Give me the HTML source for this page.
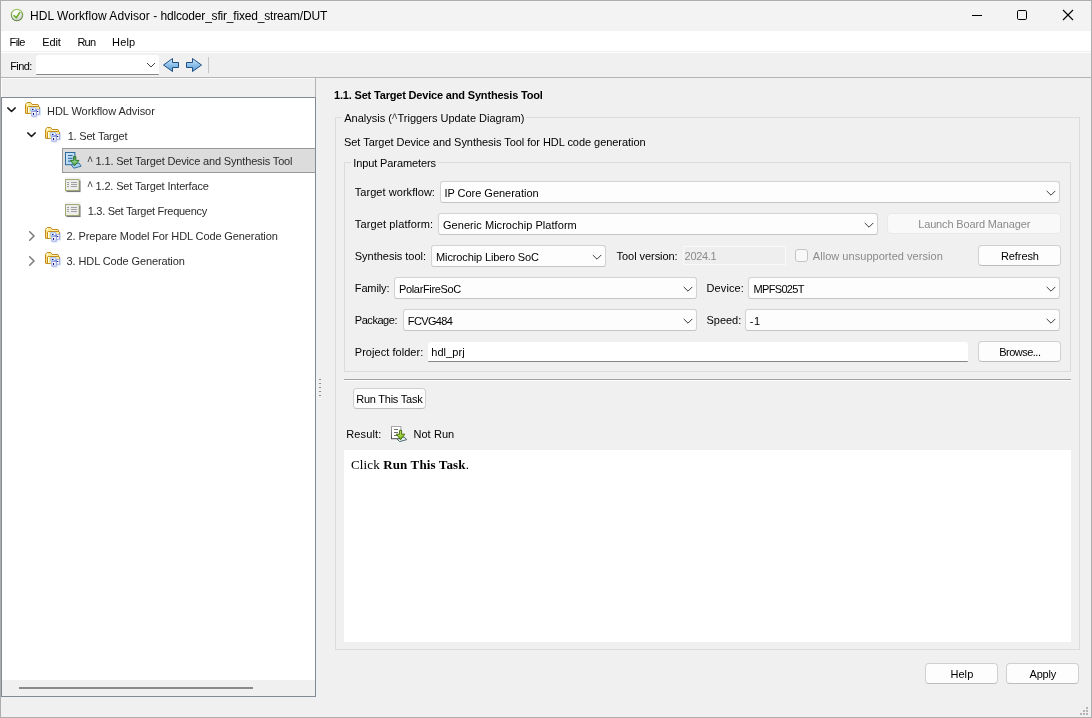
<!DOCTYPE html>
<html>
<head>
<meta charset="utf-8">
<title>HDL Workflow Advisor</title>
<style>
html,body{margin:0;padding:0;}
body{width:1092px;height:718px;overflow:hidden;background:#f0f0f0;font-family:"Liberation Sans",sans-serif;font-size:11px;color:#000;position:relative;}
.abs{position:absolute;}
.t{position:absolute;white-space:nowrap;line-height:14px;height:14px;letter-spacing:-0.1px;}
#win{position:absolute;left:0;top:0;width:1090px;height:716px;border:1px solid #adadad;}
#titlebar{left:1px;top:1px;width:1090px;height:30px;background:#f3f3f3;}
#menubar{left:1px;top:31px;width:1090px;height:20px;background:#ffffff;border-bottom:1px solid #f0f0f0;box-shadow:0 1px 0 #ffffff;}
.combo{position:absolute;height:20px;background:#fdfdfd;border:1px solid #d2d2d2;border-bottom-color:#c4c4c4;border-radius:3px;}
.combo svg{position:absolute;right:3px;top:8px;}
.btn{position:absolute;height:19px;background:#fdfdfd;border:1px solid #d0d0d0;border-bottom-color:#bcbcbc;border-radius:4px;text-align:center;line-height:20px;white-space:nowrap;letter-spacing:-0.1px;}
</style>
</head>
<body>
<div id="root" style="position:absolute;left:0;top:0;width:1092px;height:718px;will-change:transform;">
<svg width="0" height="0" style="position:absolute">
<defs>
<linearGradient id="fy" x1="0" y1="0" x2="1" y2="0"><stop offset="0" stop-color="#fff6c8"/><stop offset="0.5" stop-color="#fbe58a"/><stop offset="1" stop-color="#f6d060"/></linearGradient>
<linearGradient id="fb" x1="0" y1="0" x2="1" y2="1"><stop offset="0" stop-color="#a9c4f0"/><stop offset="1" stop-color="#7f8fd0"/></linearGradient>
<symbol id="folder" viewBox="0 0 16 16">
  <path d="M1 2.2 L2.2 1 H5.8 L7 3 H13 V5 H1 Z" fill="#fbe88a"/>
  <rect x="1" y="4" width="2" height="7.5" fill="#fbe07c"/>
  <rect x="7" y="3.4" width="6" height="1.2" fill="#fff6d4"/>
  <rect x="1.8" y="1.2" width="1.4" height="2.2" fill="#fffbe8"/>
  <path d="M0.5 11.2 V2.4 L2.1 0.5 H5.7 L7.1 2.5 H12.9 L13.4 3 V4.4" fill="none" stroke="#c68c1c" stroke-width="1" stroke-linejoin="round"/>
  <path d="M0.6 11.4 H5.8" fill="none" stroke="#bd8214" stroke-width="1"/>
  <rect x="3" y="5" width="1.1" height="6" fill="#ffffff"/>
  <rect x="4.1" y="5" width="1.6" height="6" fill="#fdf08c"/>
  <rect x="11" y="5" width="3.6" height="2.2" fill="#fdf0a4"/>
  <path d="M2.5 11 V5.2 L3.2 4.5 H14 L14.5 5.1 V7" fill="none" stroke="#c68c1c" stroke-width="1" stroke-linejoin="round"/>
  <rect x="15" y="5.6" width="0.9" height="7.6" fill="#cddef8"/>
  <rect x="7.2" y="14.6" width="5.6" height="0.9" fill="#cddef8"/>
  <rect x="11.8" y="12.6" width="3.6" height="0.9" fill="#cddef8"/>
  <rect x="5.8" y="5.8" width="4.9" height="3" fill="#ffffff" stroke="#8fb3ec" stroke-width="0.9"/>
  <rect x="11.5" y="7.3" width="3" height="4.9" fill="#ffffff" stroke="#9ba3d8" stroke-width="0.9"/>
  <rect x="6.8" y="9.5" width="4.4" height="4.6" fill="#ffffff" stroke="#8b9bdc" stroke-width="0.9"/>
  <rect x="7" y="6.9" width="1.5" height="1.1" fill="#10108a"/>
  <rect x="12" y="9" width="1.3" height="1" fill="#10108a"/>
  <rect x="8" y="11" width="1.1" height="2" fill="#10108a"/>
  <rect x="9.6" y="8.1" width="0.9" height="0.8" fill="#4a4ab0"/>
  <rect x="11" y="8.5" width="0.8" height="0.7" fill="#4a4ab0"/>
</symbol>
<symbol id="chevd" viewBox="0 0 10 6"><path d="M0.8 0.9 L4.5 4.5 L8.2 0.9" fill="none" stroke="#1a1a1a" stroke-width="1.5" stroke-linecap="round" stroke-linejoin="round"/></symbol>
<symbol id="chevr" viewBox="0 0 6 10"><path d="M0.7 0.7 L5 5 L0.7 9.3" fill="none" stroke="#7a7a7a" stroke-width="1.5" stroke-linecap="round" stroke-linejoin="round"/></symbol>
<symbol id="carr" viewBox="0 0 10 6"><path d="M1 1.2 L5 5.2 L9 1.2" fill="none" stroke="#3c3c3c" stroke-width="1" stroke-linecap="round" stroke-linejoin="round"/></symbol>
<linearGradient id="dg" x1="0" y1="0" x2="1" y2="1"><stop offset="0" stop-color="#cfe6fb"/><stop offset="1" stop-color="#a4cdf2"/></linearGradient>
<linearGradient id="gg" x1="0" y1="0" x2="0" y2="1"><stop offset="0" stop-color="#3f8a3a"/><stop offset="0.5" stop-color="#8fd086"/><stop offset="1" stop-color="#4c9a46"/></linearGradient>
<symbol id="task" viewBox="0 0 17 17">
  <path d="M5.5 12 L14 11 L16.2 14.2 L8.8 16.2 Z" fill="#a9d0ee" stroke="#2b6a9c" stroke-width="0.9" stroke-linejoin="round"/>
  <rect x="0.5" y="0.5" width="9.4" height="12.2" fill="url(#dg)" stroke="#2f6a99" stroke-width="1"/>
  <path d="M3 3.5 H7.5 M3 6.3 H7.5 M3 9.1 H6" stroke="#2c6591" stroke-width="1" fill="none"/>
  <path d="M8.6 4.6 H10.8 V8.4 H14 L9.7 13.6 L5.4 8.4 H8.6 Z" fill="url(#gg)" stroke="#2f7a2c" stroke-width="1" stroke-linejoin="round"/>
</symbol>
<linearGradient id="gd" x1="0" y1="0" x2="0" y2="1"><stop offset="0" stop-color="#a8a8a8"/><stop offset="1" stop-color="#4a4a4a"/></linearGradient>
<linearGradient id="og" x1="0" y1="0" x2="0" y2="1"><stop offset="0" stop-color="#d8f08a"/><stop offset="0.6" stop-color="#9acd32"/><stop offset="1" stop-color="#6fa01a"/></linearGradient>
<symbol id="task2" viewBox="0 0 17 17">
  <path d="M5.2 12.2 L13 11 L15.8 13.6 L8.6 15.6 Z" fill="#e4eef4" stroke="#3c5a5e" stroke-width="0.9" stroke-linejoin="round"/>
  <rect x="0.5" y="0.5" width="9.4" height="12.2" fill="#ffffff" stroke="url(#gd)" stroke-width="1"/>
  <path d="M3 3.5 H7 M3 6.5 H7 M3 9.5 H6" stroke="#6e6e6e" stroke-width="1" fill="none"/>
  <path d="M8.6 4.4 H10.6 V8.2 H13.8 L9.6 13.6 L5.4 8.2 H8.6 Z" fill="url(#og)" stroke="#44700a" stroke-width="1" stroke-linejoin="round"/>
</symbol>
<symbol id="list" viewBox="0 0 16 16">
  <rect x="0" y="0" width="16" height="16" fill="#f3f3f3"/>
  <rect x="1.5" y="3.5" width="14" height="11.5" fill="#7a7a7a"/>
  <rect x="0.5" y="2.5" width="13.5" height="11" fill="#eeeedf" stroke="#a3a878" stroke-width="1"/>
  <rect x="1.2" y="3.2" width="12.1" height="9" fill="#ececec"/>
  <path d="M2 5.5 H4 M6 5.5 H12 M2 7.5 H4 M6 7.5 H12 M2 9.5 H4 M6 9.5 H12" stroke="#a0a0a0" stroke-width="1" fill="none"/>
</symbol>
</defs>
</svg>
<div id="win"></div>
<div id="titlebar" class="abs"></div>
<!-- title icon -->
<svg class="abs" style="left:10px;top:8px" width="14" height="14" viewBox="0 0 14 14">
  <defs><radialGradient id="tg" cx="0.35" cy="0.3" r="0.8"><stop offset="0" stop-color="#ffffff"/><stop offset="0.55" stop-color="#ececec"/><stop offset="1" stop-color="#b8b8b8"/></radialGradient>
  <linearGradient id="tr" x1="0" y1="0" x2="0" y2="1"><stop offset="0" stop-color="#97c766"/><stop offset="1" stop-color="#557d33"/></linearGradient></defs>
  <circle cx="7" cy="7" r="5.7" fill="url(#tg)" stroke="url(#tr)" stroke-width="1.1"/>
  <path d="M4 7.7 L6.4 9.8 L9.7 4.6" fill="none" stroke="#74b030" stroke-width="1.7" stroke-linecap="round" stroke-linejoin="round"/>
</svg>
<!-- window controls -->
<svg class="abs" style="left:960px;top:1px" width="131" height="30" viewBox="0 0 131 30">
  <path d="M12 14.5 H22" stroke="#000" stroke-width="1" fill="none"/>
  <rect x="57.5" y="9.5" width="9" height="9" rx="1.2" fill="none" stroke="#000" stroke-width="1"/>
  <path d="M103 9 L113 19 M113 9 L103 19" stroke="#000" stroke-width="1.1" fill="none"/>
</svg>
<div id="menubar" class="abs"></div>
<!-- toolbar -->
<div class="abs" style="left:36px;top:55px;width:123px;height:19px;background:#fff;border-bottom:1px solid #868686;border-radius:3px 3px 1px 1px;"></div>
<svg class="abs" style="left:146px;top:62px" width="10" height="6" viewBox="0 0 10 6"><path d="M1 1 L5 5 L9 1" fill="none" stroke="#444" stroke-width="1"/></svg>
<svg class="abs" style="left:162px;top:57px" width="42" height="16" viewBox="0 0 42 16">
  <defs><linearGradient id="ag" x1="0" y1="0" x2="0" y2="1"><stop offset="0" stop-color="#d6ecfb"/><stop offset="0.5" stop-color="#8cc0ea"/><stop offset="1" stop-color="#5b9bd4"/></linearGradient></defs>
  <path d="M1.5 8 L10.5 1.5 L10.5 5.5 L16.5 5.5 L16.5 10.5 L10.5 10.5 L10.5 14.5 Z" fill="url(#ag)" stroke="#1f4f80" stroke-width="1" stroke-linejoin="round"/>
  <path d="M39.5 8 L30.5 1.5 L30.5 5.5 L24.5 5.5 L24.5 10.5 L30.5 10.5 L30.5 14.5 Z" fill="url(#ag)" stroke="#1f4f80" stroke-width="1" stroke-linejoin="round"/>
</svg>
<div class="abs" style="left:208px;top:57px;width:1px;height:16px;background:#c6c6c6;"></div>
<div class="abs" style="left:1px;top:77px;width:1090px;height:1px;background:#b4b4b4;"></div>
<div class="abs" style="left:1px;top:78px;width:314px;height:1px;background:#fbfbfb;"></div>
<div class="abs" style="left:315px;top:78px;width:1px;height:19px;background:#b4b4b4;"></div>
<div class="abs" style="left:1px;top:78px;width:1px;height:19px;background:#fbfbfb;"></div>
<!-- tree -->
<div id="tree" class="abs" style="left:1px;top:97px;width:313px;height:598px;border:1px solid #828a96;background:#fff;"></div>
<div class="abs" style="left:2px;top:680px;width:313px;height:16px;background:#f0f0f0;"></div>
<div class="abs" style="left:19px;top:687px;width:234px;height:2px;background:#8a8a8a;"></div>
<!-- selected row -->
<div class="abs" style="left:62px;top:148px;width:252px;height:23px;background:#dcdcdc;border:1px solid #999999;border-right:none;"></div>

<svg class="abs" style="left:7px;top:107px" width="10" height="6"><use href="#chevd"/></svg>
<svg class="abs" style="left:27px;top:132px" width="10" height="6"><use href="#chevd"/></svg>
<svg class="abs" style="left:29px;top:231px" width="6" height="10"><use href="#chevr"/></svg>
<svg class="abs" style="left:29px;top:256px" width="6" height="10"><use href="#chevr"/></svg>
<svg class="abs" style="left:25px;top:102px" width="16" height="16"><use href="#folder"/></svg>
<svg class="abs" style="left:45px;top:127px" width="16" height="16"><use href="#folder"/></svg>
<svg class="abs" style="left:45px;top:227px" width="16" height="16"><use href="#folder"/></svg>
<svg class="abs" style="left:45px;top:252px" width="16" height="16"><use href="#folder"/></svg>
<svg class="abs" style="left:65px;top:152px" width="17" height="17"><use href="#task"/></svg>
<svg class="abs" style="left:65px;top:177px" width="16" height="16"><use href="#list"/></svg>
<svg class="abs" style="left:65px;top:202px" width="16" height="16"><use href="#list"/></svg>
<svg class="abs" style="left:391px;top:426px" width="17" height="17"><use href="#task2"/></svg>
<!-- splitter -->
<div class="abs" style="left:319px;top:379px;width:2px;height:1px;background:#8c8c8c;"></div><div class="abs" style="left:319px;top:383px;width:2px;height:1px;background:#8c8c8c;"></div><div class="abs" style="left:319px;top:387px;width:2px;height:1px;background:#8c8c8c;"></div><div class="abs" style="left:319px;top:391px;width:2px;height:1px;background:#8c8c8c;"></div><div class="abs" style="left:319px;top:395px;width:2px;height:1px;background:#8c8c8c;"></div>
<div class="abs" style="left:1086px;top:707px;width:2px;height:2px;background:#b4b4b4;"></div><div class="abs" style="left:1083px;top:710px;width:2px;height:2px;background:#b4b4b4;"></div><div class="abs" style="left:1086px;top:710px;width:2px;height:2px;background:#b4b4b4;"></div><div class="abs" style="left:1080px;top:713px;width:2px;height:2px;background:#b4b4b4;"></div><div class="abs" style="left:1083px;top:713px;width:2px;height:2px;background:#b4b4b4;"></div><div class="abs" style="left:1086px;top:713px;width:2px;height:2px;background:#b4b4b4;"></div>
<!-- right panel -->
<div class="abs" style="left:335px;top:117px;width:743px;height:531px;border:1px solid #dcdcdc;"></div>
<div class="abs" style="left:344px;top:162px;width:725px;height:208px;border:1px solid #dcdcdc;"></div>

<div class="combo" style="left:440px;top:181px;width:618px;"><svg width="10" height="6"><use href="#carr"/></svg></div>
<div class="combo" style="left:438px;top:213px;width:438px;"><svg width="10" height="6"><use href="#carr"/></svg></div>
<div class="btn" style="left:887px;top:213px;width:172px;background:#f9f9f9;border-color:#e9e9e9;"></div>
<div class="combo" style="left:431px;top:245px;width:173px;"><svg width="10" height="6"><use href="#carr"/></svg></div>
<div class="abs" style="left:683px;top:246px;width:101px;height:17px;border:1px solid #f9f9f9;background:#eeeeee;"></div>
<div class="abs" style="left:795px;top:249px;width:11px;height:11px;border:1px solid #c4c4c4;border-radius:3px;background:#f8f8f8;"></div>
<div class="btn" style="left:978px;top:245px;width:81px;"></div>
<div class="combo" style="left:394px;top:277px;width:301px;"><svg width="10" height="6"><use href="#carr"/></svg></div>
<div class="combo" style="left:748px;top:277px;width:310px;"><svg width="10" height="6"><use href="#carr"/></svg></div>
<div class="combo" style="left:403px;top:309px;width:292px;"><svg width="10" height="6"><use href="#carr"/></svg></div>
<div class="combo" style="left:745px;top:309px;width:313px;"><svg width="10" height="6"><use href="#carr"/></svg></div>
<div class="abs" style="left:428px;top:342px;width:540px;height:19px;background:#fff;border-bottom:1px solid #868686;border-radius:3px 3px 1px 1px;"></div>
<div class="btn" style="left:978px;top:341px;width:81px;"></div>

<div class="abs" style="left:344px;top:379px;width:727px;height:1px;background:#a0a0a0;"></div>
<div class="abs" style="left:344px;top:380px;width:727px;height:1px;background:#ffffff;"></div>
<div class="btn" style="left:353px;top:388px;width:71px;"></div>
<div class="abs" style="left:344px;top:450px;width:727px;height:192px;background:#fff;"></div>
<div class="abs" style="left:351px;top:457px;font-family:'Liberation Serif',serif;font-size:13px;line-height:16px;white-space:nowrap;letter-spacing:0.13px;">Click <b>Run This Task</b>.</div>
<div class="btn" style="left:925px;top:663px;width:71px;"></div>
<div class="btn" style="left:1006px;top:663px;width:71px;"></div>
<div class="t" style="left:30px;top:9px;letter-spacing:-0.087px;font-size:12px;"><span style="letter-spacing:0.053px">HDL Workflow Advisor - </span><span style="letter-spacing:-0.187px">hdlcoder_sfir_fixed_stream/DUT</span></div>
<div class="t" style="left:9.6px;top:35px;letter-spacing:-0.640px;">File</div>
<div class="t" style="left:42.2px;top:35px;letter-spacing:-0.120px;">Edit</div>
<div class="t" style="left:77.4px;top:35px;letter-spacing:-0.730px;">Run</div>
<div class="t" style="left:112px;top:35px;letter-spacing:0.200px;">Help</div>
<div class="t" style="left:10.2px;top:59px;letter-spacing:-0.595px;">Find:</div>
<div class="t" style="left:47px;top:104px;letter-spacing:-0.052px;color:#2c2c2c;">HDL Workflow Advisor</div>
<div class="t" style="left:67.7px;top:129px;letter-spacing:-0.200px;color:#2c2c2c;">1. Set Target</div>
<div class="t" style="left:87.6px;top:154px;letter-spacing:-0.157px;color:#2c2c2c;"><span style="display:inline-block;letter-spacing:0;margin-right:2.8px;position:relative;top:1px;transform:scale(1,1.3);color:#444;">^</span>1.1. Set Target Device and Synthesis Tool</div>
<div class="t" style="left:87.6px;top:179px;letter-spacing:-0.160px;color:#2c2c2c;"><span style="display:inline-block;letter-spacing:0;margin-right:2.8px;position:relative;top:1px;transform:scale(1,1.3);color:#444;">^</span>1.2. Set Target Interface</div>
<div class="t" style="left:87.7px;top:204px;letter-spacing:-0.284px;color:#2c2c2c;">1.3. Set Target Frequency</div>
<div class="t" style="left:66.6px;top:229px;letter-spacing:-0.108px;color:#2c2c2c;">2. Prepare Model For HDL Code Generation</div>
<div class="t" style="left:66.6px;top:254px;letter-spacing:-0.116px;color:#2c2c2c;">3. HDL Code Generation</div>
<div class="t" style="left:334px;top:88px;letter-spacing:-0.178px;font-weight:bold;">1.1. Set Target Device and Synthesis Tool</div>
<div class="t" style="left:342.2px;top:111px;letter-spacing:0.004px;background:#f0f0f0;padding:0 2px;">Analysis (<span style="display:inline-block;letter-spacing:0;margin-right:0.4px;position:relative;top:0.5px;transform:scale(1,1.3);color:#444;">^</span>Triggers Update Diagram)</div>
<div class="t" style="left:344px;top:135px;letter-spacing:-0.045px;">Set Target Device and Synthesis Tool for HDL code generation</div>
<div class="t" style="left:351.2px;top:156px;letter-spacing:-0.100px;background:#f0f0f0;padding:0 2px;">Input Parameters</div>
<div class="t" style="left:354.8px;top:185px;letter-spacing:0.044px;">Target workflow:</div>
<div class="t" style="left:354.8px;top:217px;letter-spacing:0.128px;">Target platform:</div>
<div class="t" style="left:354.8px;top:249px;letter-spacing:-0.023px;">Synthesis tool:</div>
<div class="t" style="left:616.6px;top:249px;letter-spacing:-0.057px;">Tool version:</div>
<div class="t" style="left:684.6px;top:249px;letter-spacing:-0.316px;color:#8a8a8a;">2024.1</div>
<div class="t" style="left:812.8px;top:249px;letter-spacing:0.039px;color:#8a8a8a;">Allow unsupported version</div>
<div class="t" style="left:354.8px;top:281px;letter-spacing:-0.130px;">Family:</div>
<div class="t" style="left:706.5px;top:281px;letter-spacing:0.110px;">Device:</div>
<div class="t" style="left:354.8px;top:313px;letter-spacing:-0.458px;">Package:</div>
<div class="t" style="left:706.5px;top:313px;letter-spacing:-0.028px;">Speed:</div>
<div class="t" style="left:354.8px;top:345px;letter-spacing:0.039px;">Project folder:</div>
<div class="t" style="left:431.2px;top:345px;letter-spacing:0.080px;">hdl_prj</div>
<div class="t" style="left:346.3px;top:427px;letter-spacing:0.110px;">Result:</div>
<div class="t" style="left:413.4px;top:427px;letter-spacing:0.080px;">Not Run</div>
<div class="t" style="left:444.4px;top:186px;letter-spacing:-0.021px;">IP Core Generation</div>
<div class="t" style="left:443px;top:218px;letter-spacing:0.044px;">Generic Microchip Platform</div>
<div class="t" style="left:436px;top:250px;letter-spacing:-0.111px;">Microchip Libero SoC</div>
<div class="t" style="left:399px;top:282px;letter-spacing:-0.346px;">PolarFireSoC</div>
<div class="t" style="left:753.6px;top:282px;letter-spacing:-0.690px;">MPFS025T</div>
<div class="t" style="left:407.8px;top:314px;letter-spacing:-0.640px;">FCVG484</div>
<div class="t" style="left:749.8px;top:314px;letter-spacing:0.420px;">-1</div>
<div class="t" style="left:918.2px;top:217px;letter-spacing:-0.148px;color:#8a8a8a;">Launch Board Manager</div>
<div class="t" style="left:1001px;top:249px;letter-spacing:-0.100px;">Refresh</div>
<div class="t" style="left:999.2px;top:345px;letter-spacing:-0.511px;">Browse...</div>
<div class="t" style="left:356.2px;top:392px;letter-spacing:-0.233px;">Run This Task</div>
<div class="t" style="left:950.4px;top:667px;letter-spacing:0.080px;">Help</div>
<div class="t" style="left:1029.6px;top:667px;letter-spacing:-0.237px;">Apply</div>
</div>
</body>
</html>
